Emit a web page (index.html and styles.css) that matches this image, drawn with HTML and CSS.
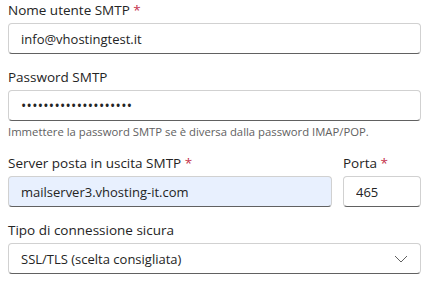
FILE: index.html
```html
<!DOCTYPE html>
<html lang="it">
<head>
<meta charset="utf-8">
<link rel="stylesheet" href="styles.css">
</head>
<body>
<form class="form">
  <div class="field">
    <label class="label">Nome utente SMTP <span class="req">*</span></label>
    <input class="input" type="text" value="info@vhostingtest.it" readonly>
  </div>
  <div class="field">
    <label class="label">Password SMTP</label>
    <input class="input pw" type="password" value="abcdefghijklmnopqrst" readonly>
    <div class="hint">Immettere la password SMTP se è diversa dalla password IMAP/POP.</div>
  </div>
  <div class="row">
    <div class="field grow">
      <label class="label">Server posta in uscita SMTP <span class="req">*</span></label>
      <input class="input filled" type="text" value="mailserver3.vhosting-it.com" readonly>
    </div>
    <div class="field port">
      <label class="label">Porta <span class="req">*</span></label>
      <input class="input" type="text" value="465" readonly>
    </div>
  </div>
  <div class="field">
    <label class="label">Tipo di connessione sicura</label>
    <div class="select">
      <span class="select-text">SSL/TLS (scelta consigliata)</span>
      <svg class="chev" width="14" height="8" viewBox="0 0 14 8"><path d="M1 1 L7 7 L13 1" fill="none" stroke="#616161" stroke-width="1"/></svg>
    </div>
  </div>
</form>
</body>
</html>
```
FILE: styles.css
```css
* { box-sizing: border-box; }
html, body { margin: 0; padding: 0; background: #fff; }
body {
  font-family: "Open Sans", "Noto Sans", sans-serif;
  font-size: 14px;
  color: #242424;
  width: 432px;
  height: 283px;
  overflow: hidden;
}
.form {
  display: flex;
  flex-direction: column;
  gap: 13px;
  padding: 0 11px 0 8px;
}
.field {
  display: flex;
  flex-direction: column;
  gap: 3px;
}
.label {
  line-height: 20px;
  font-size: 13.5px;
  color: #242424;
}
.req { color: #c4314b; }
.input, .select {
  height: 31px;
  width: 100%;
  border: 1px solid #d1d1d1;
  border-bottom-color: #616161;
  border-radius: 4px;
  padding: 0 12px;
  font-family: inherit;
  font-size: 13px;
  color: #242424;
  background: #fff;
  outline: none;
}
.input.pw { font-size: 14px; letter-spacing: 0.3px; }
.input.filled { background: #e8f0fe; }
.hint {
  font-size: 11.3px;
  line-height: 16px;
  color: #616161;
}
.row {
  display: flex;
  gap: 11px;
}
.grow { flex: 1; }
.port { width: 78px; }
.select {
  display: flex;
  align-items: center;
  justify-content: space-between;
}
```
